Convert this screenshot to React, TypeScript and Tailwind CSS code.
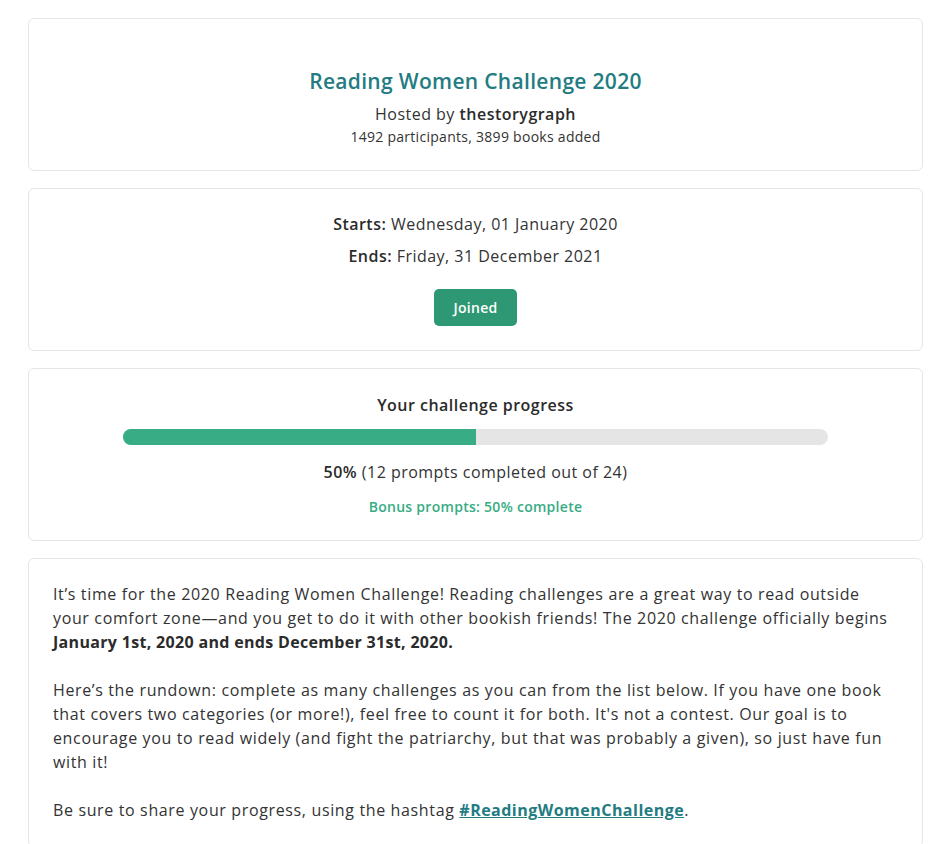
import React from 'react'

const card = 'rounded-md border border-[#e5e5e5] bg-white'

export default function App() {
  const done = 12
  const total = 24
  const pct = Math.round((done / total) * 100)

  return (
    <div className="min-h-screen bg-white px-[28px] pt-[18px] font-['Open_Sans',sans-serif] tracking-[0.03em] text-[#333]">
      <div className="flex w-[895px] flex-col gap-[17px]">
        {/* Header */}
        <div className={`${card} flex h-[153px] flex-col items-center pt-[47px]`}>
          <h1 className="text-[21px] font-semibold leading-[30px] tracking-[0.015em] text-[#227c82]">
            Reading Women Challenge 2020
          </h1>
          <p className="mt-[6px] text-[16px] leading-[24px]">
            Hosted by <span className="font-semibold text-[#2b2b2b]">thestorygraph</span>
          </p>
          <p className="text-[14px] leading-[22px] tracking-[0.02em]">1492 participants, 3899 books added</p>
        </div>

        {/* Dates + join */}
        <div className={`${card} flex h-[163px] flex-col items-center pt-[23px]`}>
          <p className="text-[16px] leading-[24px]">
            <span className="font-semibold text-[#2b2b2b]">Starts:</span> Wednesday, 01 January 2020
          </p>
          <p className="mt-[8px] text-[16px] leading-[24px]">
            <span className="font-semibold text-[#2b2b2b]">Ends:</span> Friday, 31 December 2021
          </p>
          <button className="mt-[21px] h-[37px] w-[83px] rounded-[5px] bg-[#2e9874] text-[14px] font-semibold tracking-[0.02em] text-white">
            Joined
          </button>
        </div>

        {/* Progress */}
        <div className={`${card} flex h-[173px] flex-col items-center pt-[24px]`}>
          <p className="text-[16px] font-semibold leading-[24px] text-[#2b2b2b]">Your challenge progress</p>
          <div className="mt-[12px] h-[16px] w-[705px] overflow-hidden rounded-full bg-[#e5e5e5]">
            <div className="h-full bg-[#38ac84]" style={{ width: `${pct}%` }} />
          </div>
          <p className="mt-[15px] text-[16px] leading-[24px]">
            <span className="font-semibold text-[#2b2b2b]">{pct}%</span> ({done} prompts completed out of {total})
          </p>
          <p className="mt-[13px] text-[14px] font-semibold leading-[20px] tracking-[0.02em] text-[#38ac84]">
            Bonus prompts: 50% complete
          </p>
        </div>

        {/* Description */}
        <div className={`${card} px-[24px] pt-[23px] pb-[24px] text-[16px] leading-[24px] tracking-[0.04em]`}>
          <p>
            It’s time for the 2020 Reading Women Challenge! Reading challenges are a great way to read outside
            your comfort zone—and you get to do it with other bookish friends! The 2020 challenge officially begins{' '}
            <strong className="font-bold tracking-[0.02em] text-[#2b2b2b]">
              January 1st, 2020 and ends December 31st, 2020.
            </strong>
          </p>
          <p className="mt-[24px]">
            Here’s the rundown: complete as many challenges as you can from the list below. If you have one book
            that covers two categories (or more!), feel free to count it for both. It's not a contest. Our goal is
            to encourage you to read widely (and fight the patriarchy, but that was probably a given), so just have
            fun with it!
          </p>
          <p className="mt-[24px]">
            Be sure to share your progress, using the hashtag{' '}
            <a href="#" className="font-bold tracking-[0.03em] text-[#227c82] underline">
              #ReadingWomenChallenge
            </a>
            .
          </p>
        </div>
      </div>
    </div>
  )
}
